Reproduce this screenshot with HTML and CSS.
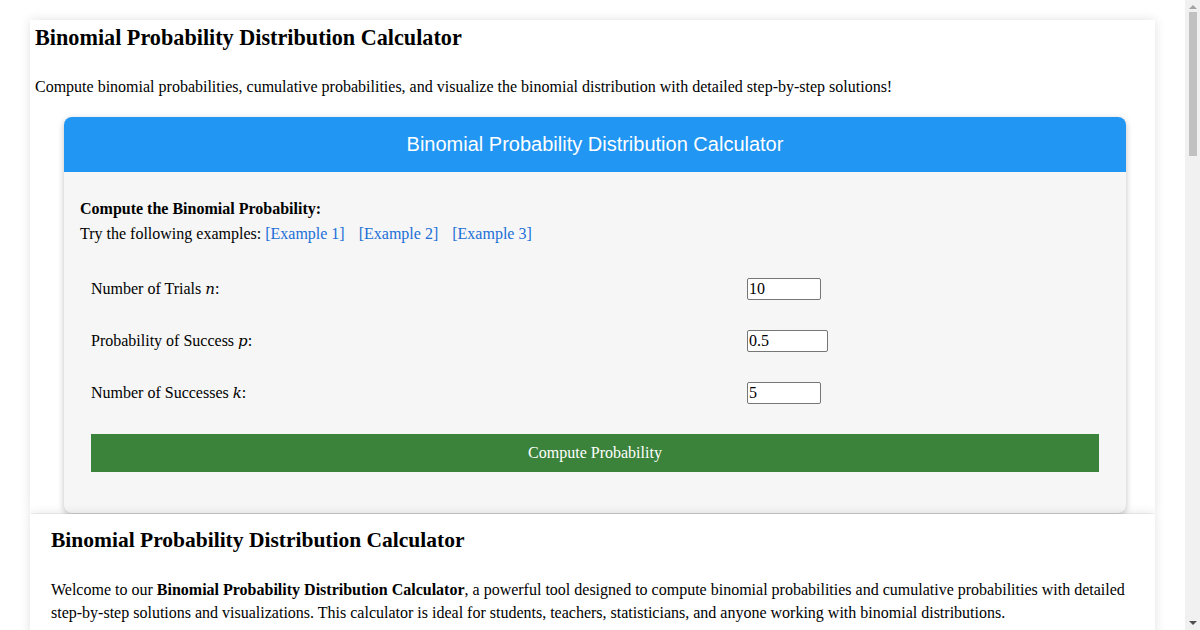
FILE: index.html
```html
<!DOCTYPE html>
<html lang="en">
<head>
<meta charset="utf-8">
<title>Binomial Probability Distribution Calculator</title>
<link rel="stylesheet" href="styles.css">
</head>
<body>
<div class="page">
  <h1 class="title">Binomial Probability Distribution Calculator</h1>
  <p class="intro">Compute binomial probabilities, cumulative probabilities, and visualize the binomial distribution with detailed step-by-step solutions!</p>
  <div class="card">
    <div class="card-head">Binomial Probability Distribution Calculator</div>
    <div class="card-body">
      <div class="lead">
        <strong>Compute the Binomial Probability:</strong><br>
        Try the following examples: <a href="#">[Example 1]</a> <a href="#">[Example 2]</a> <a href="#">[Example 3]</a>
      </div>
      <div class="form">
        <label class="lbl">Number of Trials <i class="var">n</i>:</label>
        <input class="inp w74" type="text" value="10">
        <label class="lbl">Probability of Success <i class="var">p</i>:</label>
        <input class="inp w81" type="text" value="0.5">
        <label class="lbl">Number of Successes <i class="var">k</i>:</label>
        <input class="inp w74" type="text" value="5">
        <button class="compute" type="button">Compute Probability</button>
      </div>
    </div>
  </div>
</div>
<div class="page article">
  <h2 class="subtitle">Binomial Probability Distribution Calculator</h2>
  <p class="text">Welcome to our <strong>Binomial Probability Distribution Calculator</strong>, a powerful tool designed to compute binomial probabilities and cumulative probabilities with detailed step-by-step solutions and visualizations. This calculator is ideal for students, teachers, statisticians, and anyone working with binomial distributions.</p>
  <p class="text">The binomial distribution models the number of successes in a fixed number of independent trials, each with the same probability of success. Enter the number of trials, the probability of success, and the number of successes to get started.</p>
</div>
<div class="scrollbar" aria-hidden="true">
  <span class="arrow up"></span>
  <span class="thumb"></span>
  <span class="arrow down"></span>
</div>
</body>
</html>
```
FILE: styles.css
```css
html, body {
  margin: 0;
  padding: 0;
  background: #ffffff;
  font-family: "Liberation Serif", "Times New Roman", serif;
  font-size: 16px;
  color: #000;
}
body {
  padding-right: 15px;
  overflow: hidden;
}
.page {
  margin: 20px 30px 0 30px;
  padding: 5px 5px 0 5px;
  background: #fff;
  box-shadow: 0 0 10px rgba(0,0,0,0.12);
}
.title {
  font-size: 22.2px;
  font-weight: bold;
  margin: 0;
  line-height: 26px;
}
.intro {
  margin: 26px 0 20px 0;
  line-height: 20px;
}
.card {
  margin-left: 29px;
  width: 1062px;
  border-radius: 8px;
  background: #f6f6f6;
  box-shadow: 0 2px 6px rgba(0,0,0,0.25);
  overflow: hidden;
}
.card-head {
  background: #2196f3;
  color: #fff;
  font-family: "Liberation Sans", Arial, sans-serif;
  font-size: 20px;
  height: 55px;
  display: flex;
  align-items: center;
  justify-content: center;
}
.card-body {
  padding: 28px 16px 42px 16px;
}
.lead {
  line-height: 25px;
  margin-top: -4px;
}
.lead a {
  color: #1a6fd6;
  text-decoration: none;
  margin-right: 10px;
}
.form {
  display: grid;
  grid-template-columns: 656px 1fr;
  grid-auto-rows: 52px;
  align-items: center;
  padding: 17px 11px 0 11px;
}
.lbl {
  font-size: 16px;
}
.var {
  font-family: "DejaVu Serif", "Liberation Serif", serif;
  font-style: italic;
  font-size: 15px;
}
.inp {
  height: 22px;
  box-sizing: border-box;
  border: 1px solid #767676;
  border-radius: 2px;
  padding: 0 1px;
  font-family: "Liberation Serif", "Times New Roman", serif;
  font-size: 16px;
  background: #fff;
  color: #000;
}
.w74 { width: 74px; }
.w81 { width: 81px; }
.compute {
  grid-column: 1 / span 2;
  margin-top: 15px;
  height: 38px;
  width: 100%;
  align-self: start;
  border: none;
  background: #3b833b;
  color: #fff;
  font-family: "Liberation Serif", "Times New Roman", serif;
  font-size: 16px;
}
.article {
  margin-top: 1px;
  padding: 13px 21px 20px 21px;
}
.subtitle {
  font-size: 21.5px;
  margin: 0;
  line-height: 26px;
}
.text {
  line-height: 23px;
  margin: 25px 0 16px 0;
}
.scrollbar {
  position: fixed;
  top: 0;
  right: 0;
  width: 15px;
  height: 100vh;
  background: #f1f1f1;
  display: flex;
  flex-direction: column;
  align-items: center;
}
.thumb {
  display: block;
  width: 8px;
  height: 144px;
  background: #c1c1c1;
  margin-top: 3px;
}
.arrow {
  display: block;
  width: 0;
  height: 0;
  border-left: 4px solid transparent;
  border-right: 4px solid transparent;
}
.arrow.up {
  margin-top: 5px;
  border-bottom: 4px solid #a3a3a3;
}
.arrow.down {
  margin-top: auto;
  margin-bottom: 5px;
  border-top: 4px solid #505050;
}
```
